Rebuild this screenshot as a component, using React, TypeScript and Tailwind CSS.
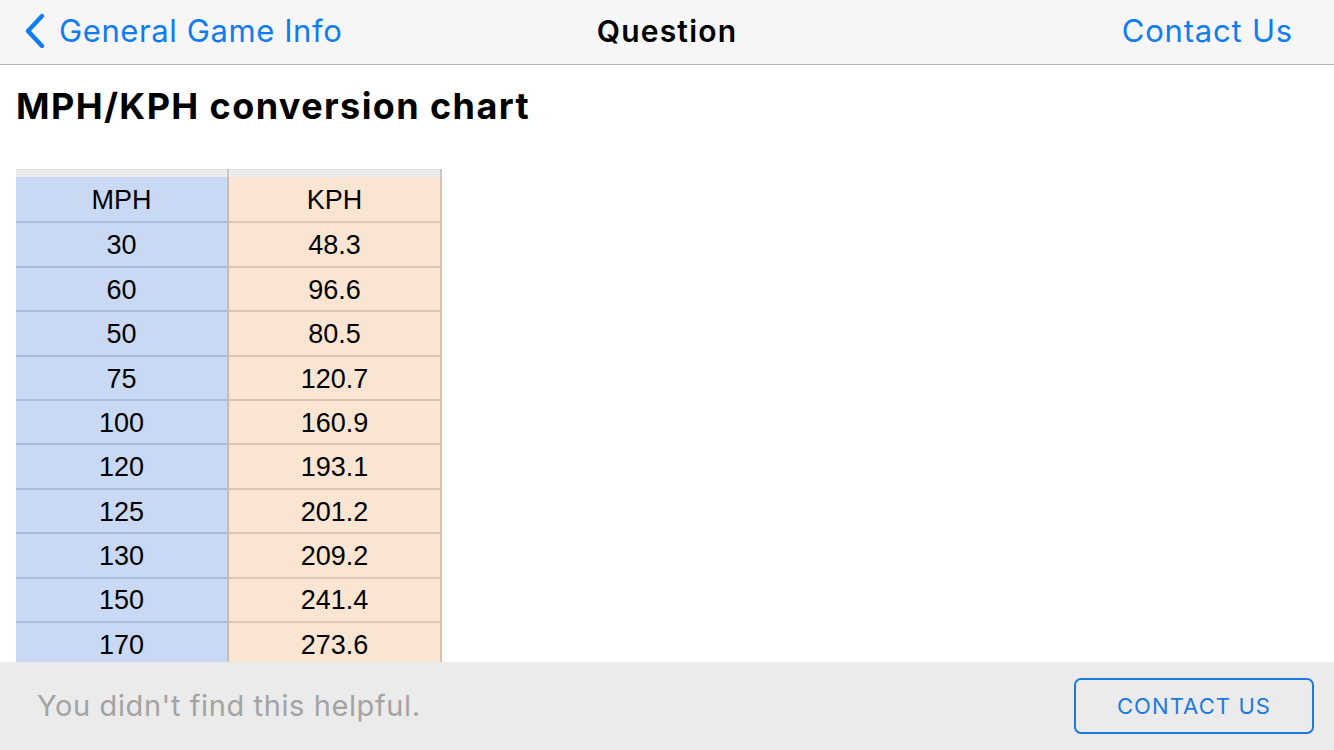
const ROWS: [string, string][] = [
  ['30', '48.3'],
  ['60', '96.6'],
  ['50', '80.5'],
  ['75', '120.7'],
  ['100', '160.9'],
  ['120', '193.1'],
  ['125', '201.2'],
  ['130', '209.2'],
  ['150', '241.4'],
  ['170', '273.6'],
]

const SANS = "font-['Inter','Noto_Sans',sans-serif]"
const TABLE_FONT = "font-['Liberation_Sans',Arial,sans-serif]"

function BackChevron() {
  return (
    <svg width="24" height="36" viewBox="0 0 24 36" fill="none" aria-hidden="true">
      <path d="M19 3 L5 18 L19 33" stroke="#0f7cf0" strokeWidth="4.4" strokeLinecap="round" strokeLinejoin="round" />
    </svg>
  )
}

function Row({ mph, kph, header }: { mph: string; kph: string; header?: boolean }) {
  return (
    <div className={`flex h-[44.4px] text-[27px] text-black ${TABLE_FONT}`}>
      <div className={`w-[212px] flex items-center justify-center pt-[2px] bg-[#c9d9f3] ${header ? '' : 'border-t-2 border-[#a9bbd6]'}`}>
        {mph}
      </div>
      <div className="w-[2px] bg-[#c9bcb0]" />
      <div className={`w-[212px] flex items-center justify-center pt-[2px] bg-[#fae5d2] ${header ? '' : 'border-t-2 border-[#dcc6b2]'}`}>
        {kph}
      </div>
      <div className="w-[2px] bg-[#d9c2b0]" />
    </div>
  )
}

export default function App() {
  return (
    <div className={`flex flex-col h-[750px] w-[1334px] overflow-hidden bg-white ${SANS}`}>
      {/* nav bar */}
      <header className="relative flex h-[65px] shrink-0 items-center justify-between bg-[#f6f6f6] border-b border-[#b4b4b4] pb-[2px]">
        <div className="flex items-center gap-[12px] text-[#0f7cf0] text-[31px] pl-[23px]">
          <BackChevron />
          <span className="tracking-[0.6px]">General Game Info</span>
        </div>
        <div className="text-[30px] font-semibold text-black absolute left-1/2 top-[9px] -translate-x-1/2 tracking-[1.2px]">Question</div>
        <div className="text-[#0f7cf0] text-[31px] pr-[41px] tracking-[0.8px]">Contact Us</div>
      </header>

      {/* content */}
      <main className="flex-1 overflow-hidden px-4">
        <h1 className="mt-[18px] text-[36px] font-bold text-black leading-[46px] tracking-[1.4px]">MPH/KPH conversion chart</h1>
        <div className="mt-[40px] w-[426px]">
          <div className="flex h-[8px]">
            <div className="w-[212px] bg-[#ececec] border-t border-[#dcdcdc]" />
            <div className="w-[2px] bg-[#c8c8c8]" />
            <div className="w-[212px] bg-[#ececec] border-t border-[#dcdcdc]" />
            <div className="w-[2px] bg-[#c8c8c8]" />
          </div>
          <Row mph="MPH" kph="KPH" header />
          {ROWS.map(([m, k]) => (
            <Row key={m} mph={m} kph={k} />
          ))}
        </div>
      </main>

      {/* footer */}
      <footer className="flex h-[88px] shrink-0 items-center justify-between bg-[#ebebeb] pl-[37px] pr-[20px]">
        <span className="text-[29px] text-[#a3a3a3] tracking-[0.6px]">You didn't find this helpful.</span>
        <button className="h-[56px] w-[240px] rounded-[7px] border-2 border-[#1b7ae0] text-[#1b7ae0] text-[22px] tracking-[1.1px]">
          CONTACT US
        </button>
      </footer>
    </div>
  )
}
